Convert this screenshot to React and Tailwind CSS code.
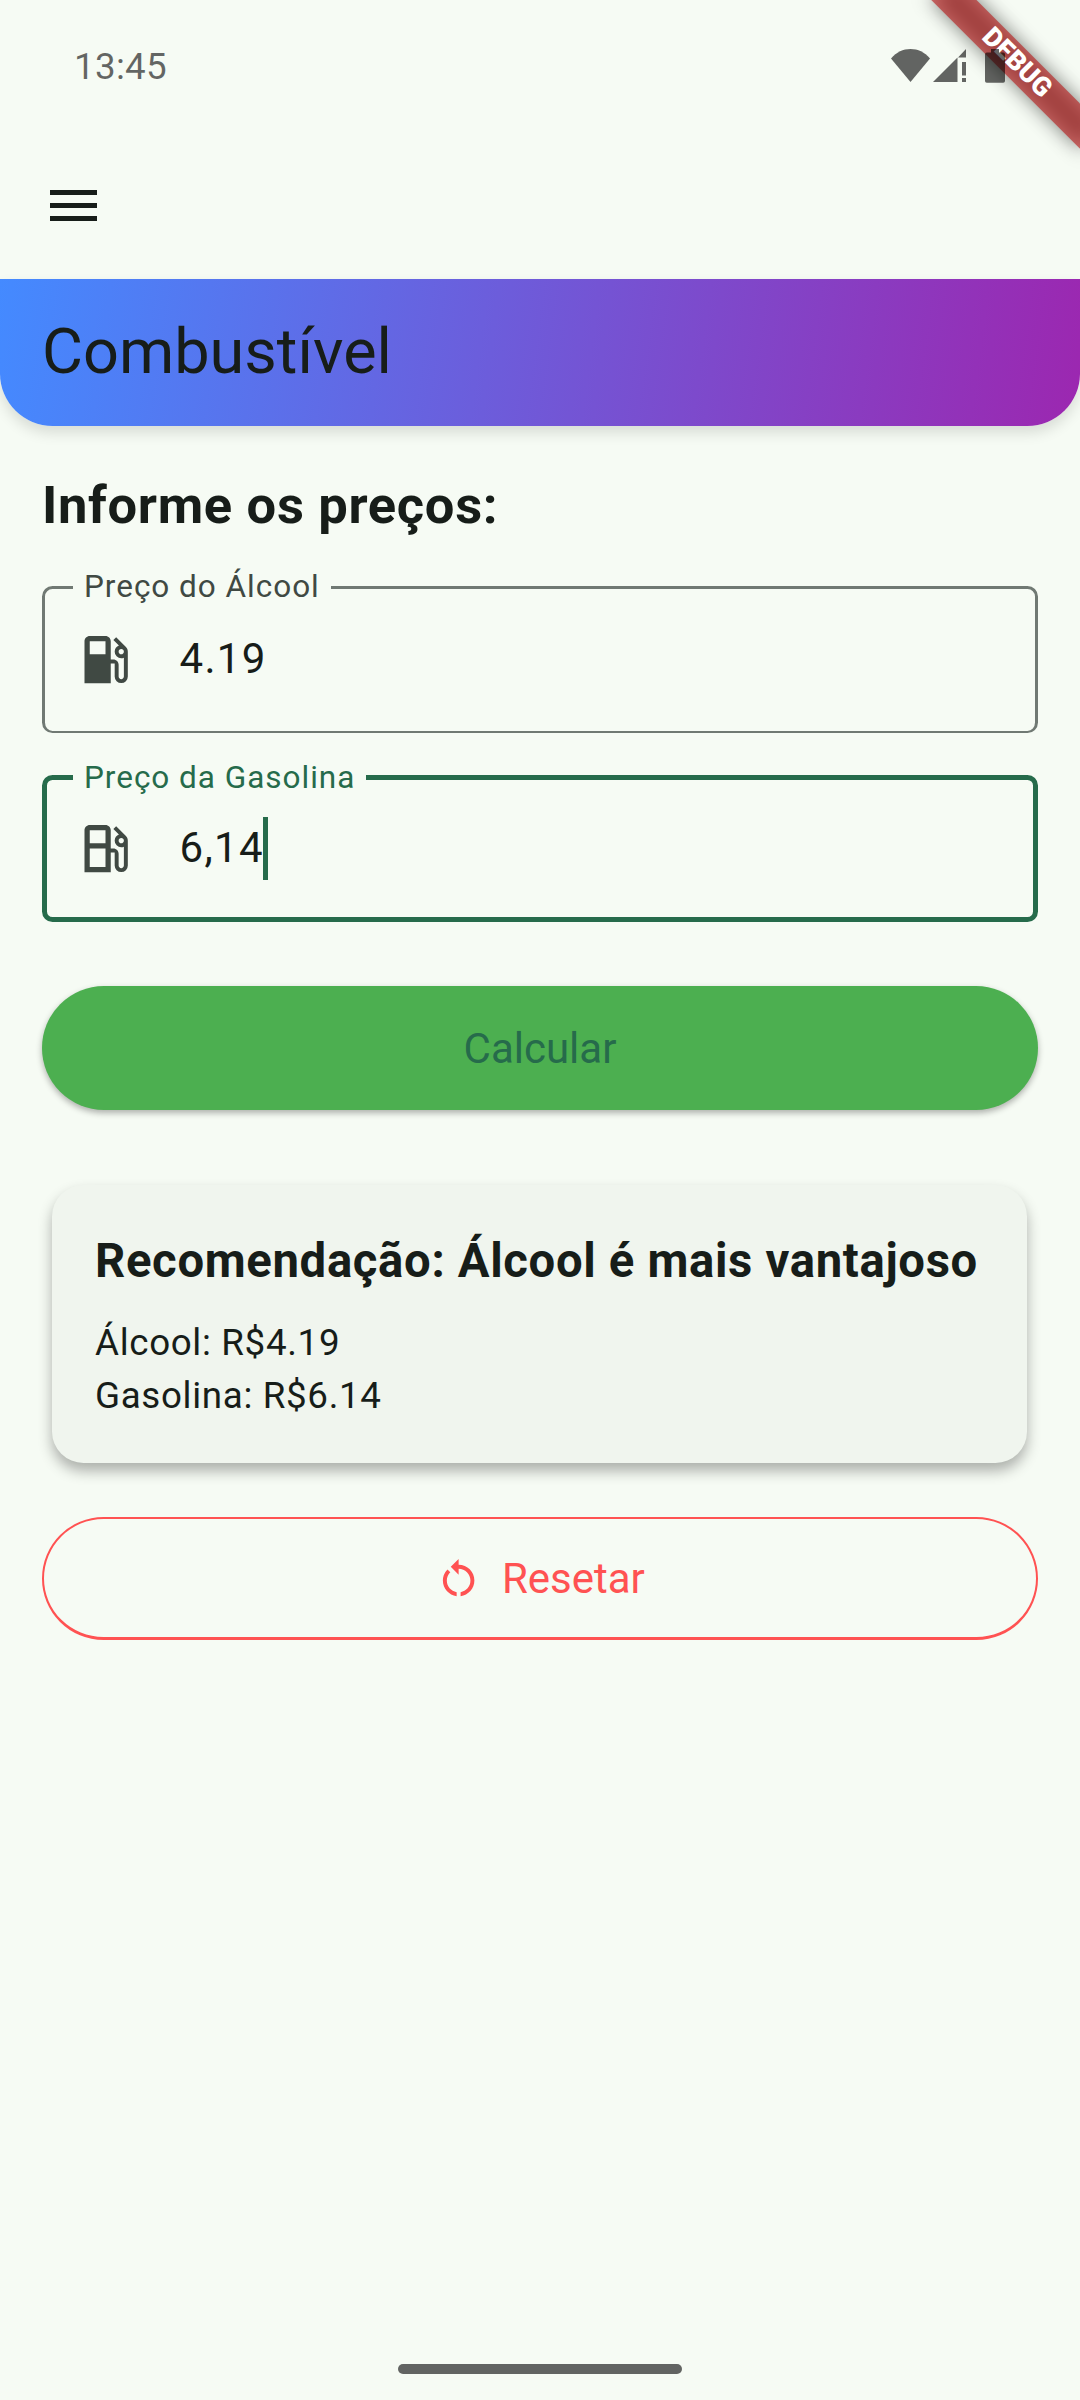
import React from "react";
import { MdLocalGasStation, MdOutlineLocalGasStation, MdRestartAlt } from "react-icons/md";

function StatusBar() {
  return (
    <div className="relative z-20 flex h-[132px] items-start justify-between pl-[74px] pr-[75px] text-black/60">
      <span className="mt-[47px] text-[36.75px] leading-[40px] tracking-[0.3px]">13:45</span>
      <div className="mt-[49px] flex">
        <svg className="h-[34px] w-[40px]" viewBox="0 0 40 34" fill="currentColor">
          <path d="M0 9.5C5.500 3 12 0 19.500 0S33.500 3 39 9.500L19.500 33Z" />
        </svg>
        <svg className="ml-[2px] h-[34px] w-[34px]" viewBox="0 0 34 34" fill="currentColor">
          <path d="M0 33 24.500 8.500V33ZM25 8.500 33 0V8.500ZM29 13h4v13.500h-4ZM29 29h4v4h-4Z" />
        </svg>
        <svg className="ml-[18px] h-[34px] w-[20px]" viewBox="0 0 20 34" fill="currentColor">
          <path d="M6 0h8v3.500h4.200a1.800 1.800 0 0 1 1.800 1.800V32a1.800 1.800 0 0 1-1.800 1.800H1.800A1.800 1.800 0 0 1 0 32V5.300a1.800 1.800 0 0 1 1.800-1.800H6Z" />
        </svg>
      </div>
    </div>
  );
}

function DebugBanner() {
  return (
    <div className="absolute right-0 top-0 z-10 h-[220px] w-[220px] overflow-hidden">
      <div className="absolute left-[52px] top-[47px] h-[31.5px] w-[210px] rotate-45">
        <div className="absolute inset-0 bg-black/50 blur-[9.6px]" />
        <div className="absolute inset-0 flex items-center justify-center bg-[#b71c1c]/63 text-[26.8px] font-black leading-none text-white">
          DEBUG
        </div>
      </div>
    </div>
  );
}

function Field({ label, icon, value, focused }) {
  return (
    <div
      className={
        focused
          ? "relative mt-[42px] flex h-[147px] items-center rounded-[10.5px] border-[5px] border-[#266b4b] pl-[26.5px]"
          : "relative mt-[45px] flex h-[147px] items-center rounded-[10.5px] border-[3px] border-b-2 border-[#707973] pb-[2px] pl-[28.5px]"
      }
    >
      <span
        className={
          focused
            ? "absolute left-[26px] top-[-18px] bg-[#f6fbf4] px-[11px] text-[31.5px] leading-[32px] tracking-[0.98px] text-[#266b4b]"
            : "absolute left-[28px] top-[-18px] bg-[#f6fbf4] px-[11px] text-[31.5px] leading-[32px] tracking-[0.98px] text-[#404943]"
        }
      >
        {label}
      </span>
      <span className="text-[63px] text-[#404943]">{icon}</span>
      <span className="mb-[2px] ml-[43px] text-[42px] leading-[63px] tracking-[1.31px]">{value}</span>
      {focused && <span className="-ml-px h-[63px] w-[5px] bg-[#266b4b]" />}
    </div>
  );
}

export default function App() {
  return (
    <div className="relative flex h-[2400px] w-[1080px] flex-col overflow-hidden bg-[#f6fbf4] font-['Roboto',sans-serif] text-[#171d19]">
      <StatusBar />
      <DebugBanner />
      <div className="flex h-[147px] items-center pl-[50px]">
        <div className="flex w-[47px] flex-col gap-[8px]">
          <div className="h-[5px] bg-[#171d19]" />
          <div className="h-[5px] bg-[#171d19]" />
          <div className="h-[5px] bg-[#171d19]" />
        </div>
      </div>

      <div className="flex h-[147px] items-center rounded-b-[52.5px] bg-[linear-gradient(97.75deg,#448aff,#9c27b0)] pb-[1px] pl-[42px] shadow-[0_7px_14px_rgba(0,0,0,0.12)]">
        <h1 className="text-[63px] leading-[84px]">Combustível</h1>
      </div>

      <main className="flex flex-col px-[42px] pt-[42px]">
        <h2 className="mt-[2px] text-[52.5px] font-bold leading-[71px] tracking-[0.66px]">Informe os preços:</h2>
        <Field label="Preço do Álcool" icon={<MdLocalGasStation />} value="4.19" />
        <Field label="Preço da Gasolina" icon={<MdOutlineLocalGasStation />} value="6,14" focused />

        <button className="mt-[64px] flex h-[124px] items-center justify-center rounded-full bg-[#4caf50] pt-[2px] text-[42px] leading-[60px] text-[#266b4b] shadow-[0_3px_6px_rgba(0,0,0,0.3)]">
          Calcular
        </button>

        <section className="ml-[10px] mr-[11px] mt-[75px] h-[278px] rounded-[31.5px] bg-[#f0f5ee] pl-[43px] pt-[42px] shadow-[0_8px_14px_rgba(0,0,0,0.3)]">
          <h3 className="whitespace-nowrap text-[47.25px] font-bold leading-[69px] tracking-[0.66px]">
            Recomendação: Álcool é mais vantajoso
          </h3>
          <div className="mt-[20px] text-[36.75px] leading-[53px] tracking-[0.66px]">
            <p>Álcool: R$4.19</p>
            <p>Gasolina: R$6.14</p>
          </div>
        </section>

        <button className="mt-[54px] flex h-[123px] items-center justify-center gap-[19.5px] rounded-full border-[2px] border-b-[3px] border-[#ff5252] pt-[2px] text-[42px] leading-[60px] text-[#ff5252]">
          <MdRestartAlt className="h-[47.25px] w-[47.25px]" />
          <span>Resetar</span>
        </button>
      </main>

      <div className="mt-auto mb-[26px] h-[10px] w-[284px] self-center rounded-full bg-[#626462]" />
    </div>
  );
}
